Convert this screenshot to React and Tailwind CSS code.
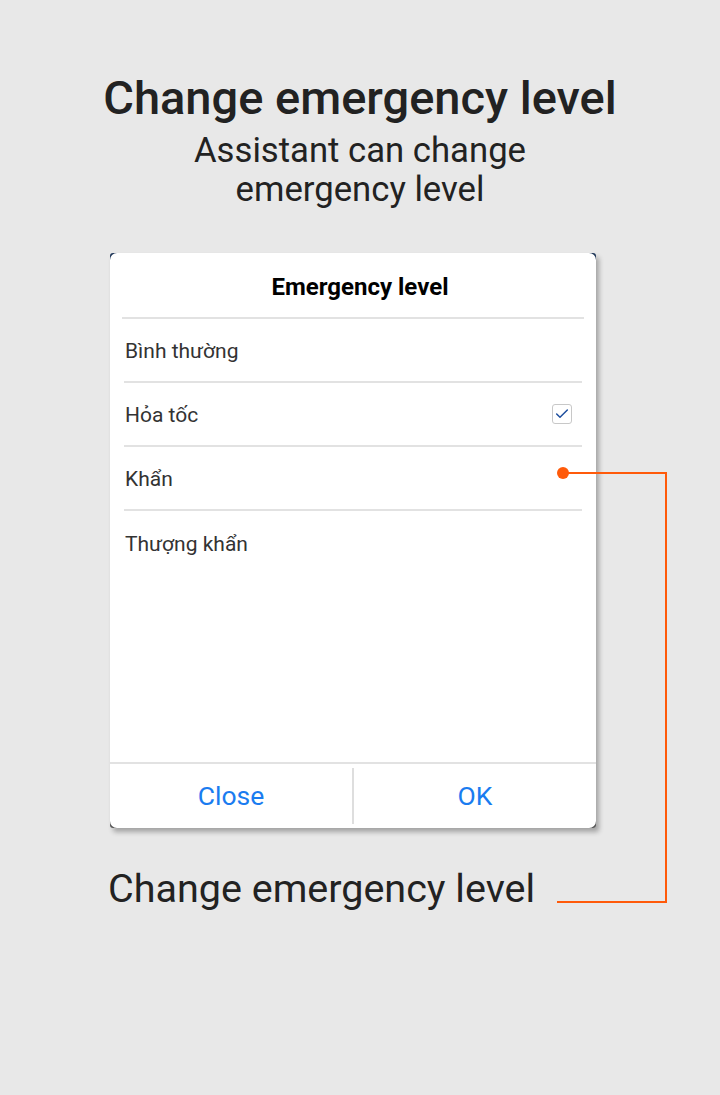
import { Check } from 'lucide-react';

const levels = [
    { label: 'Bình thường', checked: false },
    { label: 'Hỏa tốc', checked: true },
    { label: 'Khẩn', checked: false },
    { label: 'Thượng khẩn', checked: false, last: true },
];

const App = () => {
    return (
        <div className="relative w-[720px] h-[1095px] bg-[#e8e8e8] text-[#222] overflow-hidden" style={{ fontFamily: 'Roboto, "Noto Sans", sans-serif' }}>
            {/* Heading */}
            <div className="flex flex-col items-center pt-[69px]">
                <h1 className="text-[47px] leading-[58px] font-medium text-[#222]">Change emergency level</h1>
                <p className="text-[34.7px] leading-[39px] text-center text-[#222] w-[380px] mt-[4px]">
                    Assistant can change emergency level
                </p>
            </div>

            {/* Dialog */}
            <div className="mt-[44px] ml-[110px] w-[486px] rounded-[3px] bg-gradient-to-b from-[#1d3557] to-[#555] shadow-[3px_4px_5px_rgba(0,0,0,0.3)]">
                <div className="bg-white rounded-[7px] h-[575px] flex flex-col">
                    <div className="h-[64px] flex items-center justify-center pt-[3px] pl-[14px] text-[24px] font-bold text-black">
                        Emergency level
                    </div>
                    <div className="mx-[12px] h-[2px] bg-[#e2e2e2]"></div>
                    <div className="px-[14px] flex-1">
                        {levels.map((l) => (
                            <div
                                key={l.label}
                                className={`h-[64px] flex items-center justify-between pl-[1px] pr-[10px] ${l.last ? '' : 'border-b-2 border-[#e2e2e2]'}`}
                            >
                                <span className="text-[21px] text-[#333] pt-[4px]">{l.label}</span>
                                {l.checked && (
                                    <span className="w-[20px] h-[20px] rounded-[3px] border border-[#c8c8c8] flex items-center justify-center">
                                        <Check size={16} strokeWidth={2.2} className="text-[#1d4e9e]" />
                                    </span>
                                )}
                            </div>
                        ))}
                    </div>
                    <div className="h-[66px] border-t-2 border-[#e2e2e2] flex">
                        <button className="flex-1 text-[26.5px] text-[#1a7cf0] flex items-center justify-center">Close</button>
                        <div className="w-[2px] my-[4px] bg-[#dedede]"></div>
                        <button className="flex-1 text-[26.5px] text-[#1a7cf0] flex items-center justify-center">OK</button>
                    </div>
                </div>
            </div>

            {/* Caption */}
            <p className="mt-[38px] ml-[108px] text-[39.5px] leading-[46px] text-[#222]">Change emergency level</p>

            {/* Annotation */}
            <svg className="absolute left-0 top-0" width="720" height="1095" viewBox="0 0 720 1095">
                <circle cx="563" cy="473" r="6" fill="#ff5a0a" />
                <polyline points="563,473 666,473 666,902 557,902" fill="none" stroke="#ff5a0a" strokeWidth="2" />
            </svg>
        </div>
    );
};

export default App;
